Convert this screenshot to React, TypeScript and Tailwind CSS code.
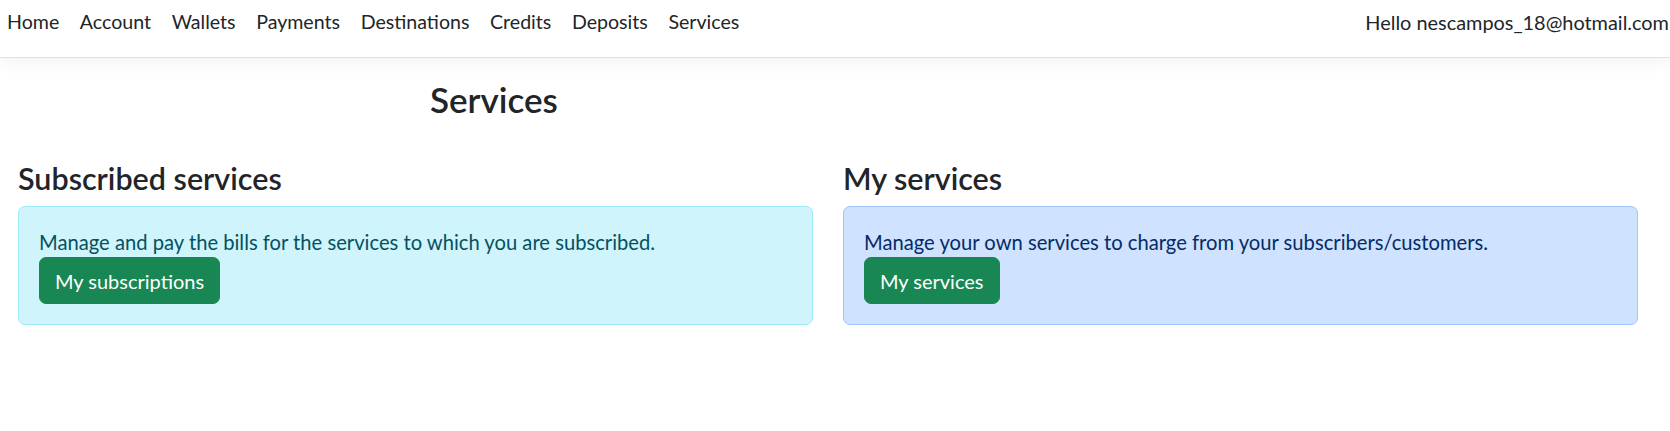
const navLinks = ['Home', 'Account', 'Wallets', 'Payments', 'Destinations', 'Credits', 'Deposits', 'Services']

export default function App() {
  return (
    <div className="min-h-screen w-full overflow-hidden bg-white font-[family-name:Lato,sans-serif] text-[#212529]">
      <nav className="flex h-[58px] items-start justify-between border-b border-[#dee2e6] bg-white pl-[7px] pt-[7px] shadow-[0_5px_15px_rgba(0,0,0,0.05)]">
        <ul className="flex gap-[20.6px] text-[19.6px] leading-[30px]">
          {navLinks.map((l) => (
            <li key={l}>
              <a href="#" className="text-[#212529]">{l}</a>
            </li>
          ))}
        </ul>
        <span className="shrink-0 whitespace-nowrap pr-[1px] text-[19.9px] leading-[30px]">Hello nescampos_18@hotmail.com</span>
      </nav>

      <div className="pt-[20px]">
        <h2 className="pl-[430px] text-[35px] font-semibold leading-[42px]">Services</h2>

        <div className="mt-[40px] grid w-[1638px] grid-cols-2 gap-[30px] pl-[18px]">
          <div>
            <h4 className="mb-[10px] text-[30.5px] font-semibold leading-[36px]">Subscribed services</h4>
            <div className="rounded-[7px] border border-[#9eeaf9] bg-[#cff4fc] p-[20px] leading-[30px] text-[#055160]">
              <p className="text-[20.2px]">Manage and pay the bills for the services to which you are subscribed.</p>
              <button className="h-[47px] rounded-[7px] border border-[#198754] bg-[#198754] px-[15px] text-[20px] leading-[30px] text-white">
                My subscriptions
              </button>
            </div>
          </div>
          <div>
            <h4 className="mb-[10px] text-[30.5px] font-semibold leading-[36px]">My services</h4>
            <div className="rounded-[7px] border border-[#9ec5fe] bg-[#cfe2ff] p-[20px] leading-[30px] text-[#052c65]">
              <p className="text-[20.2px]">Manage your own services to charge from your subscribers/customers.</p>
              <button className="h-[47px] rounded-[7px] border border-[#198754] bg-[#198754] px-[15px] text-[20px] leading-[30px] text-white">
                My services
              </button>
            </div>
          </div>
        </div>
      </div>
    </div>
  )
}
